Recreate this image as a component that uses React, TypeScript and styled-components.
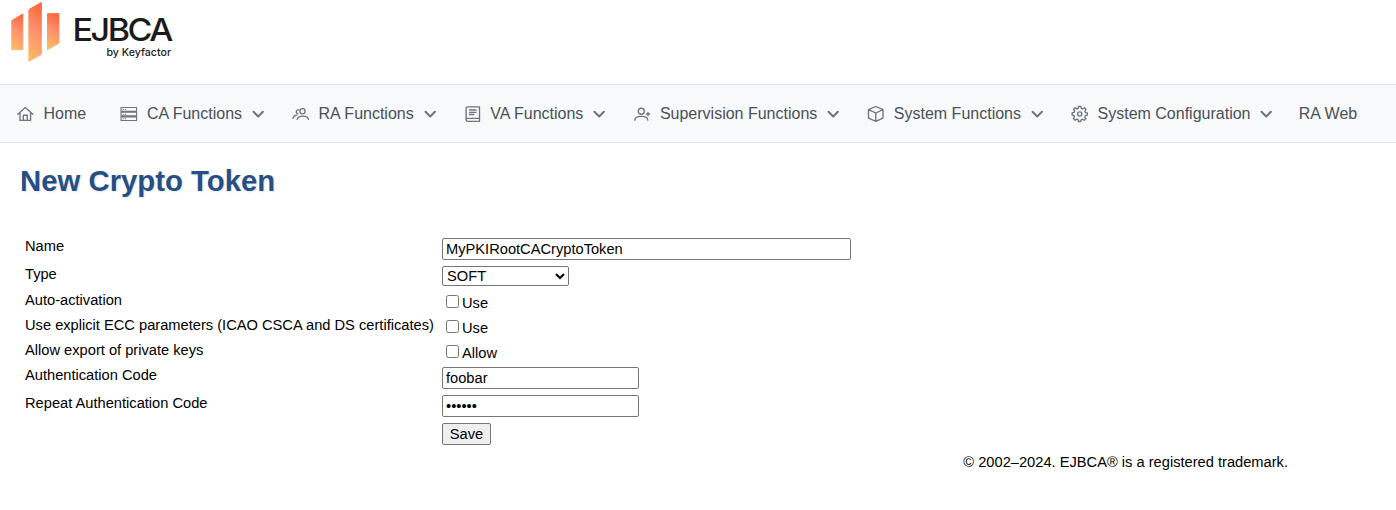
import React from "react";
import styled, { createGlobalStyle } from "styled-components";

const GlobalStyle = createGlobalStyle`
  * { box-sizing: border-box; }
  body {
    margin: 0;
    background: #fff;
    color: #000;
    font-family: "Liberation Sans", Arial, sans-serif;
    font-size: 14.667px;
  }
`;

const Page = styled.div`
  min-height: 510px;
`;

const Header = styled.header`
  height: 84px;
  padding-left: 10px;
`;

const LogoSvg = styled.svg`
  display: block;
`;

const Nav = styled.nav`
  display: flex;
  align-items: center;
  height: 59px;
  padding-left: 16px;
  background: #f8f9fb;
  border-top: 1px solid #dee2e6;
  border-bottom: 1px solid #dee2e6;
`;

const NavItem = styled.a<{ $space?: number }>`
  display: flex;
  align-items: center;
  flex: none;
  margin-right: ${(p) => p.$space ?? 26.85}px;
  color: #495057;
  font-size: 16px;
  line-height: 20px;
  white-space: nowrap;
`;

const NavIcon = styled.svg<{ $gap?: number }>`
  flex: none;
  width: 18px;
  height: 18px;
  margin: 1px ${(p) => p.$gap ?? 8.7}px 0 0;
  fill: none;
  stroke: #6c757d;
  stroke-width: 1.35;
  stroke-linecap: round;
  stroke-linejoin: round;
`;

const Chevron = styled.svg`
  flex: none;
  width: 14px;
  height: 14px;
  margin: 1px 0 0 9px;
  fill: none;
  stroke: #6c757d;
  stroke-width: 2;
  stroke-linecap: round;
  stroke-linejoin: round;
`;

const Title = styled.h1`
  margin: 0;
  padding: 21px 0 0 20px;
  height: 92px;
  color: #284f84;
  font-size: 29.333px;
  line-height: 34px;
  font-weight: bold;
  text-shadow: 1px 1px 2px #dde6ee;
`;

const Form = styled.form`
  display: grid;
  grid-template-columns: 417px 1fr;
  padding-left: 25px;
`;

const Label = styled.label`
  padding-top: 3px;
  line-height: 17px;
  white-space: nowrap;
`;

const Cell = styled.div<{ $height: number }>`
  display: flex;
  align-items: flex-start;
  height: ${(p) => p.$height}px;
  padding-top: 3px;
`;

const TextInput = styled.input<{ $width: number }>`
  width: ${(p) => p.$width}px;
  height: 22px;
  padding: 1px 3px;
  border: 1px solid #767676;
  border-radius: 2px;
  background: #fff;
  color: #000;
  font: 14.667px "Liberation Sans", Arial, sans-serif;
  outline: none;
`;

const Select = styled.select`
  width: 127px;
  height: 20px;
  padding: 0;
  border: 1px solid #767676;
  border-radius: 2px;
  background: #fff;
  color: #000;
  font: 14.667px "Liberation Sans", Arial, sans-serif;
`;

const CheckLabel = styled.label`
  display: flex;
  align-items: flex-start;
  line-height: 17px;
  padding-top: 3px;
`;

const Checkbox = styled.input`
  width: 13px;
  height: 13px;
  margin: 0 3px 0 4px;
`;

const SaveButton = styled.button`
  width: 49px;
  height: 22px;
  padding: 0;
  border: 1px solid #767676;
  border-radius: 2px;
  background: #efefef;
  color: #000;
  font: 14.667px "Liberation Sans", Arial, sans-serif;
`;

const Footer = styled.footer`
  padding: 6px 108px 0 0;
  line-height: 17px;
  text-align: right;
`;

const Logo = () => (
  <LogoSvg width="170" height="66" viewBox="10 0 170 66" role="img" aria-label="EJBCA by Keyfactor">
    <defs>
      <linearGradient id="bar" x1="0.6" y1="0" x2="0.4" y2="1">
        <stop offset="0" stopColor="#f8693c" />
        <stop offset="0.45" stopColor="#fd8f6c" />
        <stop offset="1" stopColor="#feb966" />
      </linearGradient>
    </defs>
    <g fill="url(#bar)" stroke="url(#bar)" strokeLinejoin="round">
      <path d="M11.8 20.5L22.8 14V49.6H11.8Z" />
      <path d="M28.9 9.5L41.3 2.5V54.2L28.9 61.4Z" />
      <path d="M47.5 13.7H58.9V43L47.5 49.6Z" />
    </g>
    <g fill="#1b1b1b" fontFamily="Inter, sans-serif">
      <text transform="translate(72.6 41) scale(1.08 1)" fontSize="31.5" fontWeight="500" letterSpacing="-2.3">
        EJBCA
      </text>
      <text x="106.5" y="56" fontSize="10.8" fontWeight="500" textLength="64.5" lengthAdjust="spacingAndGlyphs">
        by Keyfactor
      </text>
    </g>
  </LogoSvg>
);

const icons = {
  home: <path d="M1.8 9.2L9.3 2.6L16.8 9.2M4 7.5V15.4H14.6V7.5M7.3 15.3V10.2H11.3V15.3" />,
  server: (
    <path d="M1 2.5H16.6V6.3H1ZM1 7.3H16.6V10.9H1ZM1 11.9H16.6V15.5H1ZM3 4.5H3.4M5.3 4.5H5.7M3 9.2H3.4M5.3 9.2H5.7M3 13.7H3.4M5.3 13.7H5.7" strokeWidth="1.1" />
  ),
  people: (
    <>
      <circle cx="10.5" cy="6.2" r="2.6" />
      <path d="M5.2 14.4C5.8 10 15.8 10 16.4 14.4M6.6 4.9C4 4.5 3.4 8.2 5.9 8.8M4.8 10.2C2.6 10.4 1.2 11.6 1 13.4" />
    </>
  ),
  book: (
    <path d="M15.5 1.8H3.6Q2.1 1.8 2.1 3V14.8Q2.1 16.3 3.6 16.3H15.5ZM2.1 15Q2.1 13.3 3.8 13.3H15.5M5.5 5H12.1M5.5 7.3H12.1M5.5 9.5H9.8" />
  ),
  userPlus: (
    <>
      <circle cx="8.3" cy="6.2" r="3" />
      <path d="M1.8 15.2C2.1 10.1 14.5 10.1 14.8 15.2M13.3 9H16.7M15 7.3V10.7" />
    </>
  ),
  box: <path d="M8.8 1.5L16 4.7V13.1L8.8 16.3L1.5 13.1V4.7ZM1.5 4.7L8.8 8L16 4.7M8.8 8V16.3" />,
  gear: (
    <>
      <circle cx="8.7" cy="9" r="2.1" />
      <path transform="translate(-.3 0)" d="M7.8 1.5H10.2L10.6 3.4L12 4L13.8 2.8L15.3 4.5L14.2 6.2L14.8 7.6L16.6 8V10.2L14.7 10.7L14.1 12L15.1 13.8L13.4 15.3L11.8 14.2L10.5 14.8L10.1 16.5H7.8L7.4 14.7L6 14.1L4.3 15.2L2.7 13.6L3.8 11.9L3.2 10.5L1.4 10.1V7.9L3.3 7.4L3.9 6L2.8 4.4L4.4 2.8L6.1 3.9L7.4 3.3Z" />
    </>
  ),
};

const navItems: { label: string; icon?: keyof typeof icons; menu?: boolean; gap?: number; space?: number }[] = [
  { label: "Home", icon: "home", gap: 9.5, space: 34 },
  { label: "CA Functions", icon: "server", menu: true },
  { label: "RA Functions", icon: "people", menu: true },
  { label: "VA Functions", icon: "book", menu: true },
  { label: "Supervision Functions", icon: "userPlus", menu: true },
  { label: "System Functions", icon: "box", menu: true },
  { label: "System Configuration", icon: "gear", menu: true, space: 25.3 },
  { label: "RA Web" },
];

const App = () => (
  <Page>
    <GlobalStyle />
    <Header>
      <Logo />
    </Header>
    <Nav>
      {navItems.map((item) => (
        <NavItem key={item.label} $space={item.space}>
          {item.icon && (
            <NavIcon viewBox="0 0 18 18" $gap={item.gap}>
              {icons[item.icon]}
            </NavIcon>
          )}
          {item.label}
          {item.menu && (
            <Chevron viewBox="0 0 14 14">
              <path d="M2.5 4.8L7.2 9.5L11.9 4.8" />
            </Chevron>
          )}
        </NavItem>
      ))}
    </Nav>
    <main>
      <Title>New Crypto Token</Title>
      <Form onSubmit={(e) => e.preventDefault()}>
        <Label htmlFor="name">Name</Label>
        <Cell $height={28}>
          <TextInput id="name" $width={409} defaultValue="MyPKIRootCACryptoToken" spellCheck={false} />
        </Cell>
        <Label htmlFor="type">Type</Label>
        <Cell $height={26}>
          <Select id="type">
            <option>SOFT</option>
          </Select>
        </Cell>
        <Label>Auto-activation</Label>
        <Cell $height={25}>
          <CheckLabel>
            <Checkbox type="checkbox" />
            Use
          </CheckLabel>
        </Cell>
        <Label>Use explicit ECC parameters (ICAO CSCA and DS certificates)</Label>
        <Cell $height={25}>
          <CheckLabel>
            <Checkbox type="checkbox" />
            Use
          </CheckLabel>
        </Cell>
        <Label>Allow export of private keys</Label>
        <Cell $height={25}>
          <CheckLabel>
            <Checkbox type="checkbox" />
            Allow
          </CheckLabel>
        </Cell>
        <Label htmlFor="code">Authentication Code</Label>
        <Cell $height={28}>
          <TextInput id="code" $width={197} defaultValue="foobar" spellCheck={false} />
        </Cell>
        <Label htmlFor="repeat">Repeat Authentication Code</Label>
        <Cell $height={28}>
          <TextInput id="repeat" type="password" $width={197} defaultValue="foobar" />
        </Cell>
        <span />
        <Cell $height={28}>
          <SaveButton type="submit">Save</SaveButton>
        </Cell>
      </Form>
    </main>
    <Footer>© 2002–2024. EJBCA® is a registered trademark.</Footer>
  </Page>
);

export default App;
